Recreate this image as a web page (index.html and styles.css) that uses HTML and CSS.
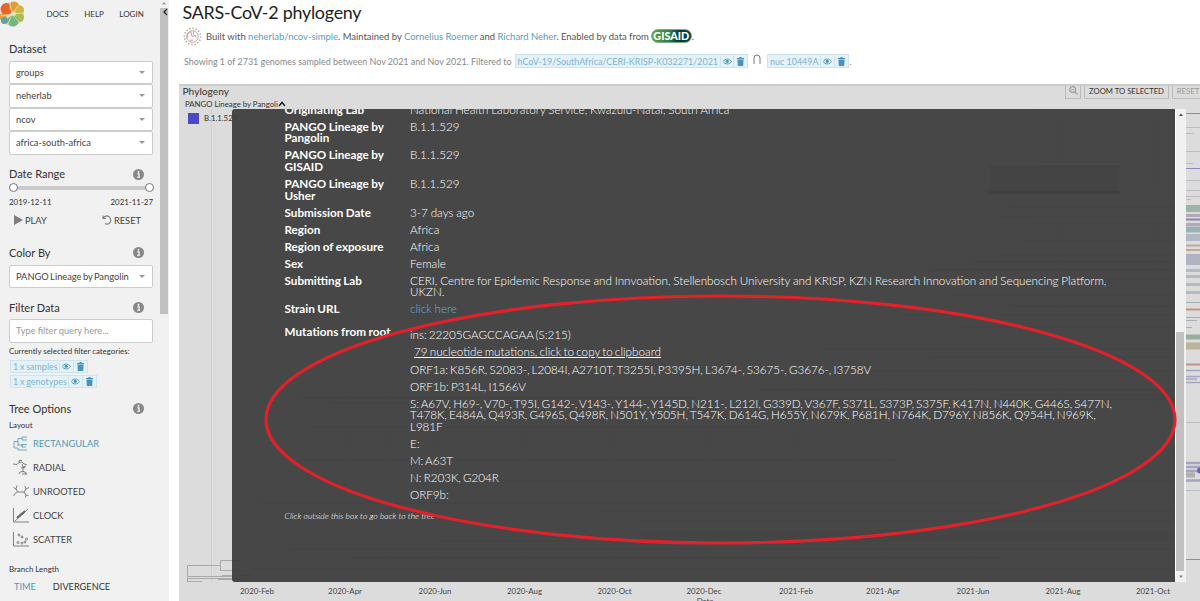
FILE: index.html
```html
<!DOCTYPE html>
<html lang="en">
<head>
  <meta charset="UTF-8" />
  <meta name="viewport" content="width=device-width, initial-scale=1.0" />
  <title>SARS-CoV-2 phylogeny</title>
  <link rel="stylesheet" href="styles.css">
</head>
<body>

  <svg class="defs" width="0" height="0">
    <symbol id="info" viewBox="0 0 10 10">
      <circle cx="5" cy="5" r="5" fill="#888"/>
      <path d="M4 4.400h1.500v3M3.700 7.500h2.700" stroke="#fff" stroke-width="1" fill="none"/>
      <circle cx="5" cy="2.500" r=".8" fill="#fff"/>
    </symbol>
    <symbol id="eye" viewBox="0 0 10 8">
      <path d="M.6 4C2.8.6 7.2.6 9.400 4 7.200 7.400 2.800 7.400.6 4z" fill="none" stroke="#5097ba"/>
      <circle cx="5" cy="3.800" r="1.700" fill="#5097ba"/>
    </symbol>
    <symbol id="trash" viewBox="0 0 8 10">
      <path d="M0 1h2.500l.5-1h2l.5 1H8v1.500H0zM.6 3h6.800L7 10H1z" fill="#4a93ba"/>
    </symbol>
  </svg>

  <aside class="sidebar">
    <div class="controls">
      <nav class="nav">
        <svg class="logo" viewBox="0 0 26 26">
          <circle cx="13" cy="13" r="12" fill="#e8ddb0"/>
          <circle cx="7.500" cy="8" r="6" fill="#ea632b"/>
          <circle cx="15" cy="5.500" r="5" fill="#e39b39"/>
          <circle cx="20.500" cy="9" r="4.600" fill="#cfb541"/>
          <circle cx="20.500" cy="16.500" r="4.600" fill="#aabd52"/>
          <circle cx="4" cy="16" r="3.500" fill="#e59c3c"/>
          <circle cx="5.500" cy="19.500" r="3.600" fill="#5aa5a8"/>
          <circle cx="14" cy="20" r="5.600" fill="#75b681"/>
          <path d="M13 13L11 2M13 13L19 5M13 13l11-1M13 13l7 8M13 13l-4 10M13 13l-11 2" stroke="#f2e9c0" stroke-width=".7"/>
        </svg>
        <a>DOCS</a><a>HELP</a><a>LOGIN</a>
      </nav>

      <h3 class="title dataset">Dataset</h3>
      <div class="select">groups<i></i></div>
      <div class="select">neherlab<i></i></div>
      <div class="select">ncov<i></i></div>
      <div class="select">africa-south-africa<i></i></div>

      <h3 class="title range-title">Date Range <svg class="info"><use href="#info"/></svg></h3>
      <div class="slider"><b></b><b></b></div>
      <div class="dates"><span>2019-12-11</span><span>2021-11-27</span></div>
      <div class="playback">
        <span><svg width="9" height="10" viewBox="0 0 9 10"><path d="M0 0l9 5-9 5z" fill="#7d7d7d"/></svg>PLAY</span>
        <span><svg width="10" height="10" viewBox="0 0 10 10"><path d="M1 .5v3h3M1.200 3.200C3 .6 5.500.6 7 1.600 9.500 3.500 9.300 7.500 6.500 8.800 5.500 9.200 4 9.200 3 8.500" fill="none" stroke="#777" stroke-width="1.100"/></svg>RESET</span>
      </div>

      <h3 class="title color-title">Color By <svg class="info"><use href="#info"/></svg></h3>
      <div class="select">PANGO Lineage by Pangolin<i></i></div>

      <h3 class="title filter-title">Filter Data <svg class="info"><use href="#info"/></svg></h3>
      <div class="select query">Type filter query here...</div>
      <p class="note">Currently selected filter categories:</p>
      <div class="badge-row"><span class="badge"><span>1 x samples</span><svg class="eye"><use href="#eye"/></svg><svg class="trash"><use href="#trash"/></svg></span></div>
      <div class="badge-row"><span class="badge"><span>1 x genotypes</span><svg class="eye"><use href="#eye"/></svg><svg class="trash"><use href="#trash"/></svg></span></div>

      <h3 class="title tree-title">Tree Options <svg class="info"><use href="#info"/></svg></h3>
      <p class="sub">Layout</p>
      <ul class="layouts">
        <li class="active"><svg viewBox="0 0 16 16"><path d="M1 12V5.500h4M1 12h4M5 5.500V2.500h4M5 5.500V9M9 1h5M9 1v3h5M5 9v1M5 9h4v2M9 8.500h5M9 8.500V11h4M5 12v2h9"/></svg>RECTANGULAR</li>
        <li><svg viewBox="0 0 16 16"><path d="M0 4l4 .5 2-2 3-.5 2 2 3 .5M6 2.500V.5h3M9 4l1 3v5M10 7l3-1M8 8l4-.5M6 14l1-2 3-.5 3 1v2M9 14h5"/></svg>RADIAL</li>
        <li><svg viewBox="0 0 16 16"><path d="M.5 3.500L3 5l1.500 3L2 9.500.5 12M3 5l1-3.500M4.500 8H11l2-3 3-1.500M13 5l-1-3M11 8l2 3 2.500.5M13 11l-.5 2.500"/></svg>UNROOTED</li>
        <li><svg viewBox="0 0 16 16"><path d="M.5 0v14H16M2 13L15 1"/><path d="M4 10l2-2M6 9l2-3M8 7l1-2M9 6l3-3" stroke-width="2"/></svg>CLOCK</li>
        <li><svg viewBox="0 0 16 16"><path d="M.5 0v14H16"/><g><circle cx="6" cy="3" r="1"/><circle cx="9" cy="5" r="1"/><circle cx="13.500" cy="7" r="1"/><circle cx="5" cy="10.500" r="1"/><circle cx="9" cy="11" r="1"/><circle cx="12" cy="10" r="1"/></g></svg>SCATTER</li>
      </ul>
      <p class="sub branch">Branch Length</p>
      <div class="lengths"><span class="active">TIME</span><span>DIVERGENCE</span></div>
    </div>
    <div class="scroll">
      <svg width="9" height="8" viewBox="0 0 9 8"><path d="M2 4.500L4 2l2 2.500z" fill="#999"/></svg>
      <div class="thumb"><svg width="9" height="10" viewBox="0 0 9 10"><path d="M7 1L4 4l3 3" fill="none" stroke="#222" stroke-width="1.300"/></svg></div>
    </div>
  </aside>

  <main class="main">
    <h1>SARS-CoV-2 phylogeny</h1>
    <div class="byline">
      <svg class="virus" viewBox="0 0 18 18">
        <circle cx="9" cy="9" r="7.700" stroke="#a9a0a0" stroke-width="1.500" stroke-dasharray="1.200 1.800"/>
        <circle cx="9" cy="9" r="5.500" stroke="#b99a9a" stroke-width=".9"/>
        <path d="M4.500 10V6.500l3-2 1 4.500 4-1M10 4v3l3 3M6.500 12.500h3" stroke="#d08a8a" stroke-width=".8"/>
      </svg>
      <span class="byline-text">Built with <a>neherlab/ncov-simple</a>. Maintained by <a>Cornelius Roemer</a> and <a>Richard Neher</a>. Enabled by data from</span>
      <span class="gisaid">GISAID</span><span>.</span>
    </div>
    <div class="summary">
      <span class="summary-text">Showing 1 of 2731 genomes sampled between Nov 2021 and Nov 2021. Filtered to</span>
      <span class="badge strain"><span>hCoV-19/SouthAfrica/CERI-KRISP-K032271/2021</span><svg class="eye"><use href="#eye"/></svg><svg class="trash"><use href="#trash"/></svg></span>
      <svg class="cap" width="8" height="10" viewBox="0 0 8 10"><path d="M1 10V4a3 3 0 0 1 6 0v6" fill="none" stroke="#777"/></svg>
      <span class="badge geno"><span>nuc 10449A</span><svg class="eye"><use href="#eye"/></svg><svg class="trash"><use href="#trash"/></svg></span><span class="dot">.</span>
    </div>

    <section class="card">
      <svg class="chart" width="1021" height="517" viewBox="179 84 1021 517">
        <g class="grid">
          <path d="M211.500 109V582M257.500 109V582M301.500 109V582M345.500 109V582M390.500 109V582M435.500 109V582M524.500 109V582M615.500 109V582M704.500 109V582M796.500 109V582M882.500 109V582M972.500 109V582M1063.500 109V582M1153.500 109V582"/>
        </g>
        <g class="tree">
          <path d="M187.500 581V565.500H220.500M220.500 560.500V570.500M220.500 560.500H240M220.500 570.500H240M187 576.500H235M187 578.500H245M187 581.500H202M218 579.500H250M222 575.500H250"/>
          <path d="M1030 110H1174M1020 121H1174M1010 131H1174M1020 139H1174M1030 146H1174M1000 155H1174M1040 162H1174M1010 175H1174M1020 182H1174" opacity=".5"/>
          <path d="M1010 207H1174M1000 217H1174M1030 223H1174M980 232H1174M1020 241H1174M1000 255H1174M970 262H1174M930 270H1174M960 279H1174M950 295H1174M1010 306H1174M900 315H1174M960 327H1174M820 349H1174M930 357H1174M860 371H1174M760 390H1174M800 399H1174"/>
          <path d="M300 398H700M330 403H800M310 427H760M340 440H830M300 460H900M420 481H1174M260 503H1000M600 511H1174M640 521H1174M440 541H1174M290 549H1174M350 558H1000M250 569H1174" opacity=".8"/>
        </g>
        <path d="M989 165h130v27H989z" fill="#5a2c70" opacity=".25"/>
        <path d="M988 192.500H1120" stroke="#2b0a70" stroke-width="3" opacity=".6"/>
        <path d="M1000 393h174v8h-174zM640 530h534v10H640z" fill="#555" opacity=".2"/>
        <g class="tips">
          <path d="M1186 113.500h14M1186 168.500h14M1186 559.500h14" stroke="#8b8bbb"/>
          <path d="M1186 127.500h14M1186 133.500h8M1186 151.500h14M1186 163.500h7M1186 180.500h14M1186 190.500h14M1186 196.500h14M1186 199.500h5M1186 422.500h14M1186 490.500h14" stroke="#b9bdc3"/>
          <path d="M1186 208.500h14" stroke="#9db5a7" stroke-width="7"/>
          <path d="M1186 215.500h14" stroke="#b4a9b4" stroke-width="3"/>
          <path d="M1186 219.500h14" stroke="#8a85b8" stroke-width="2"/>
          <path d="M1186 224.500h14" stroke="#b4a9b5" stroke-width="3"/>
          <path d="M1186 229.500h14" stroke="#9ab1b6" stroke-width="6"/>
          <path d="M1186 237.500h14" stroke="#b1b9c4" stroke-width="7"/>
          <path d="M1186 245.500h14M1186 250h14" stroke="#bdaa98" stroke-width="2"/>
          <path d="M1186 259.500h14" stroke="#b0b3c2" stroke-width="11"/>
          <path d="M1186 270.500h14M1186 276.500h14M1186 284.500h14M1186 292.500h14" stroke="#b3bac1" stroke-width="3"/>
          <path d="M1186 309.500h14M1186 364.500h14" stroke="#c59287" stroke-width="2"/>
          <path d="M1186 302.500h14M1186 317.500h14M1186 320.500h11M1186 327.500h6" stroke="#a4b0b8"/>
          <path d="M1186 337h14" stroke="#98b09b" stroke-width="5"/>
          <path d="M1186 346h14" stroke="#b9b49a" stroke-width="7"/>
          <path d="M1186 370.500h14M1186 376.500h14M1186 379h11M1186 382.500h14" stroke="#a5a4c2" stroke-width="1.500"/>
          <path d="M1186 463h14M1186 467h14M1186 471h14M1186 480.500h14" stroke="#a3a3c2" stroke-width="2.500"/>
          <path d="M1186 475h9" stroke="#b0b0b0" stroke-width="5"/>
          <circle cx="1200" cy="470.500" r="3" fill="#6a60c0"/>
        </g>
        <g class="axis">
          <text x="257" y="593.500">2020-Feb</text><text x="345" y="593.500">2020-Apr</text><text x="435" y="593.500">2020-Jun</text><text x="524.500" y="593.500">2020-Aug</text><text x="614.500" y="593.500">2020-Oct</text><text x="704" y="593.500">2020-Dec</text><text x="796" y="593.500">2021-Feb</text><text x="883" y="593.500">2021-Apr</text><text x="973" y="593.500">2021-Jun</text><text x="1063" y="593.500">2021-Aug</text><text x="1153" y="593.500">2021-Oct</text>
          <text x="705" y="604">Date</text>
        </g>
      </svg>
      <header class="card-head">
        <h2>Phylogeny</h2>
        <div class="buttons">
          <button class="mag"><svg width="9" height="9" viewBox="0 0 9 9"><path d="M8.500 8.500L5.700 5.700M3.700.6a3 3 0 1 0 .01 0M2.300 3.700h2.800" fill="none" stroke="#999" stroke-width="1.100"/></svg></button>
          <button class="zoom">ZOOM TO SELECTED</button>
          <button class="reset">RESET</button>
        </div>
      </header>
      <div class="legend-title">PANGO Lineage by Pangoli<svg width="8" height="6" viewBox="0 0 8 6"><path d="M1 5l3-3.500L7 5" fill="none" stroke="#222" stroke-width="1.500"/></svg></div>
      <div class="legend-item"><i></i>B.1.1.529</div>
    </section>
  </main>

  <div class="modal">
    <div class="modal-body">
      <dl class="meta">
        <dt>Originating Lab</dt><dd>National Health Laboratory Service, Kwazulu-Natal, South Africa</dd>
        <dt>PANGO Lineage by<br>Pangolin</dt><dd>B.1.1.529</dd>
        <dt>PANGO Lineage by<br>GISAID</dt><dd>B.1.1.529</dd>
        <dt>PANGO Lineage by<br>Usher</dt><dd>B.1.1.529</dd>
        <dt>Submission Date</dt><dd>3-7 days ago</dd>
        <dt>Region</dt><dd>Africa</dd>
        <dt>Region of exposure</dt><dd>Africa</dd>
        <dt>Sex</dt><dd>Female</dd>
        <dt>Submitting Lab</dt><dd>CERI, Centre for Epidemic Response and Innvoation, Stellenbosch University and KRISP, KZN Research Innovation and Sequencing Platform,<br>UKZN.</dd>
        <dt>Strain URL</dt><dd><a>click here</a></dd>
        <dt class="mut-label">Mutations from root</dt>
        <dd class="mutations">
          <p>ins: 22205GAGCCAGAA (S:215)</p>
          <p class="copy"><u>79 nucleotide mutations, click to copy to clipboard</u></p>
          <p>ORF1a: K856R, S2083-, L2084I, A2710T, T3255I, P3395H, L3674-, S3675-, G3676-, I3758V</p>
          <p>ORF1b: P314L, I1566V</p>
          <p>S: A67V, H69-, V70-, T95I, G142-, V143-, Y144-, Y145D, N211-, L212I, G339D, V367F, S371L, S373P, S375F, K417N, N440K, G446S, S477N,<br>T478K, E484A, Q493R, G496S, Q498R, N501Y, Y505H, T547K, D614G, H655Y, N679K, P681H, N764K, D796Y, N856K, Q954H, N969K,<br>L981F</p>
          <p>E:</p>
          <p>M: A63T</p>
          <p>N: R203K, G204R</p>
          <p>ORF9b:</p>
        </dd>
      </dl>
      <p class="hint">Click outside this box to go back to the tree</p>
    </div>
    <div class="modal-scroll">
      <svg width="10" height="10" viewBox="0 0 10 10"><path d="M3 7l2-2.500L7 7z" fill="#444"/></svg>
      <div class="modal-thumb"></div>
      <svg width="10" height="11" viewBox="0 0 10 11"><path d="M3 4.500h4L5 7z" fill="#888"/></svg>
    </div>
  </div>

  <svg class="highlight" width="1200" height="601" viewBox="0 0 1200 601">
    <ellipse cx="720.500" cy="419.500" rx="454.500" ry="123.500" fill="none" stroke="#e2212b" stroke-width="3.200"/>
  </svg>

</body>
</html>
```
FILE: styles.css
```css
* {
  box-sizing: border-box;
}

body {
  margin: 0;
  width: 1200px;
  height: 601px;
  overflow: hidden;
  display: flex;
  position: relative;
  background: #fff;
  font-family: Lato, "Open Sans", sans-serif;
  color: #333;
}

h1, h2, h3, p, ul, dl, dd {
  margin: 0;
  padding: 0;
  font-weight: 400;
}

.defs {
  position: absolute;
}

svg {
  flex: none;
}

/* sidebar */
.sidebar {
  width: 169px;
  height: 601px;
  background: #f1f1f1;
  display: flex;
  flex: none;
}

.controls {
  width: 160px;
  padding-left: 9px;
}

.nav {
  height: 27px;
  display: flex;
  align-items: center;
  font-size: 8px;
  margin-left: -9px;
}

.nav a {
  margin-right: 15.5px;
}

.logo {
  width: 26px;
  height: 26px;
  margin-right: 21.500px;
  margin-left: -1px;
}

.title {
  height: 16px;
  line-height: 16px;
  font-size: 11px;
  width: 144px;
  display: flex;
  justify-content: space-between;
  align-items: center;
}

.title.dataset {
  margin: 14px 0 3.500px;
}

.info {
  width: 11px;
  height: 11px;
  margin-right: 9px;
}

.select {
  width: 144px;
  height: 23.500px;
  border: 1px solid #ccc;
  border-radius: 2px;
  background: #fff;
  font-size: 9.300px;
  word-spacing: -1px;
  line-height: 21px;
  padding: 0 7px 0 6px;
  color: #444;
  display: flex;
  align-items: center;
  justify-content: space-between;
  white-space: nowrap;
}

.select i {
  border: 3px solid transparent;
  border-top-color: #999;
  border-bottom: 0;
}

.range-title {
  margin-top: 11.500px;
}

.slider {
  height: 10px;
  width: 145px;
  margin-top: 1px;
  display: flex;
  justify-content: space-between;
  background: linear-gradient(#cacaca, #cacaca) center / 100% 4px no-repeat;
}

.slider b {
  width: 9px;
  height: 9px;
  border: 1px solid #777;
  border-radius: 50%;
  background: #fff;
}

.dates {
  width: 144px;
  display: flex;
  justify-content: space-between;
  font-size: 7.900px;
  line-height: 10px;
  margin-top: 4px;
}

.playback {
  width: 127px;
  margin: 7px 0 0 5px;
  height: 12px;
  display: flex;
  justify-content: space-between;
  align-items: center;
  font-size: 9.300px;
  color: #444;
}

.playback span {
  display: flex;
  gap: 2px;
}

.color-title {
  margin: 18.500px 0 4px;
}

.filter-title {
  margin: 11.500px 0 3.500px;
}

.select.query {
  color: #999;
  word-spacing: -.3px;
}

.note, .sub {
  font-size: 7.900px;
  line-height: 10px;
}

.note {
  margin: 3.500px 0 4px;
}

.badge-row {
  height: 15.200px;
  padding-left: 1px;
  display: flex;
}

.badge {
  height: 13px;
  border: 1px solid #cde3f0;
  background: #e6f2fa;
  color: #7fb3d3;
  display: inline-flex;
  align-items: center;
  font-size: 8.950px;
  line-height: 11px;
  padding-left: 2px;
  white-space: nowrap;
}

.badge-row .badge {
  word-spacing: -.5px;
}

.eye {
  width: 13.500px;
  height: 11px;
  padding: 1.500px;
  margin-left: 1.500px;
  border-left: 1px solid #cde3f0;
}

.trash {
  width: 14px;
  height: 11px;
  padding: 1px 2px;
  border-left: 1px solid #cde3f0;
}

.tree-title {
  margin-top: 10.500px;
}

.sub {
  margin-top: 3.500px;
}

.layouts {
  list-style: none;
  margin-top: 1.500px;
  font-size: 9.300px;
  color: #444;
}

.layouts li {
  height: 24px;
  display: flex;
  align-items: center;
  padding-left: 4px;
  gap: 4px;
}

.layouts svg {
  width: 16px;
  height: 16px;
  fill: none;
  stroke: #666;
  stroke-width: .8;
}

.layouts .active, .lengths .active {
  color: #5097ba;
}

.layouts .active svg {
  stroke: #5097ba;
}

.branch {
  margin-top: 12px;
}

.lengths {
  display: flex;
  gap: 17px;
  padding-left: 5px;
  font-size: 9.200px;
  line-height: 12px;
  margin-top: 7.500px;
}

.scroll {
  width: 9px;
  height: 601px;
  display: flex;
  flex-direction: column;
}

.thumb {
  width: 8px;
  height: 306px;
  background: #c1c1c1;
}

.thumb svg, .scroll svg {
  display: block;
}

/* main column */
.main {
  margin-left: 10px;
  width: 1021px;
  flex: none;
  display: flex;
  flex-direction: column;
}

h1 {
  font-size: 17.900px;
  letter-spacing: -.25px;
  line-height: 25px;
  height: 26px;
  padding-left: 3.500px;
  color: #222;
}

.byline {
  height: 20px;
  display: flex;
  align-items: center;
  padding-left: 4px;
  font-size: 9.450px;
  color: #555;
  white-space: nowrap;
}

.byline a {
  color: #5c9bc4;
}

.virus {
  width: 19px;
  height: 19px;
  margin-right: 4px;
  fill: none;
}

.gisaid {
  width: 41px;
  height: 14px;
  margin-left: 2px;
  border-radius: 7px;
  border: 1px solid #7ca98a;
  background: linear-gradient(100deg, #62a83a, #2b7f4c 45%, #044043 65%);
  color: #fff;
  font-weight: 900;
  font-size: 10.800px;
  line-height: 12px;
  text-align: center;
}

.summary {
  height: 14px;
  margin: 8px 0 16px;
  display: flex;
  align-items: center;
  padding-left: 5px;
  font-size: 8.950px;
  color: #888;
  white-space: nowrap;
}

.summary .badge {
  height: 14px;
}

.strain {
  margin-left: 3px;
}

.cap {
  margin: 0 6px 4px 5px;
}

.dot {
  margin-left: 1px;
}

.card {
  height: 517px;
  background: #dcdcdc;
  border-top: 2px solid #ccc;
  position: relative;
}

.chart {
  position: absolute;
  left: 0;
  top: -2px;
}

.grid {
  stroke: #cfcfcf;
}

.tree {
  stroke: #aaa;
  fill: none;
}

.axis {
  font-size: 7.900px;
  fill: #444;
  text-anchor: middle;
}

.card-head {
  height: 13px;
  display: flex;
  justify-content: space-between;
  position: relative;
  overflow: hidden;
}

.card-head h2 {
  font-size: 10.200px;
  line-height: 10px;
  padding-left: 3.500px;
}

.buttons {
  display: flex;
  gap: 3px;
  width: 135px;
}

.buttons button {
  flex: none;
  font-family: inherit;
  font-size: 7.700px;
  line-height: 10px;
  height: 13px;
  padding: 0 0 2px;
  border: 1px solid #bdbdbd;
  border-top: 0;
  background: #dcdcdc;
  color: #333;
}

.buttons .mag {
  width: 16px;
}

.buttons .zoom {
  width: 85px;
}

.buttons .reset {
  width: 32px;
  color: #999;
}

.legend-title {
  position: relative;
  font-size: 7.800px;
  line-height: 10px;
  padding-left: 6px;
}

.legend-item {
  position: relative;
  display: flex;
  align-items: center;
  gap: 5px;
  font-size: 7.800px;
  line-height: 10px;
  height: 11px;
  margin: 3.500px 0 0 9px;
}

.legend-item i {
  width: 11px;
  height: 11px;
  background: #4a48c6;
}

/* details overlay */
.modal {
  position: absolute;
  left: 232px;
  top: 109px;
  width: 954px;
  height: 473px;
  display: flex;
  border-radius: 3px 0 0 3px;
  overflow: hidden;
}

.modal-body {
  width: 943px;
  background: rgba(62, 62, 62, .95);
  color: #fff;
  padding: 0 0 0 52.500px;
}

.meta {
  display: grid;
  grid-template-columns: 125.500px 1fr;
  margin-top: -7.900px;
  font-size: 11.700px;
  line-height: 11.700px;
  word-spacing: -.4px;
  white-space: nowrap;
}

.meta dt {
  font-weight: 700;
  padding: 2.650px 0;
}

.meta dd {
  padding: 2.650px 0;
  font-weight: 300;
}

.meta a {
  color: #5fb4da;
}

.meta p {
  padding: 2.650px 0;
  font-weight: 300;
}

.meta .mut-label {
  padding-top: 7.900px;
  letter-spacing: .05px;
}

.meta .mutations {
  padding-top: 8.700px;
  letter-spacing: -.035px;
  word-spacing: -1px;
}

.meta .mutations p {
  padding: 2.650px 0;
}

.meta .mutations .copy {
  padding: 2.900px 4px;
  letter-spacing: 0;
}

.hint {
  font-size: 8.600px;
  line-height: 12px;
  font-style: italic;
  font-weight: 300;
  margin-top: 4.500px;
}

.modal-scroll {
  width: 11px;
  background: #f1f1f1;
  border-left: 1px solid #fff;
}

.modal-scroll svg {
  display: block;
}

.modal-thumb {
  width: 8px;
  height: 239px;
  margin-top: 213px;
  background: #c1c1c1;
}

.highlight {
  position: absolute;
  left: 0;
  top: 0;
}
```
